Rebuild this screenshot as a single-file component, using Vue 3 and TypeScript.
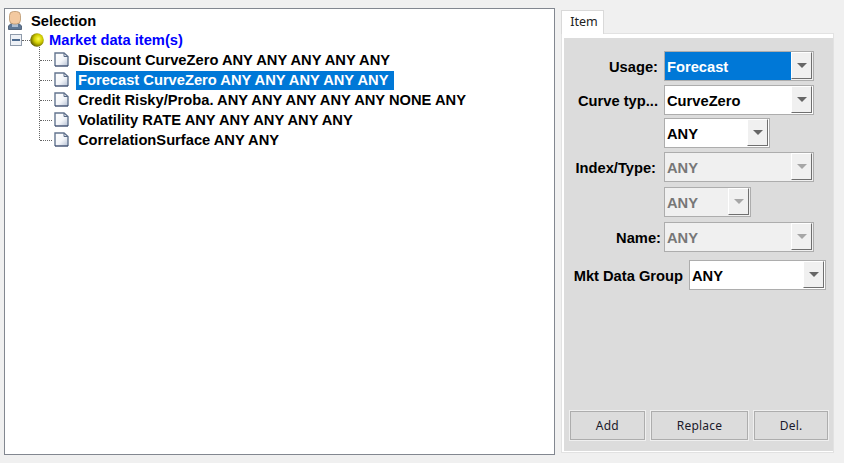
<script setup lang="ts">
interface TreeItem { label: string; selected?: boolean }
interface Field { label: string; value: string; cls: string; disabled?: boolean; active?: boolean }

const items: TreeItem[] = [
  { label: 'Discount CurveZero ANY ANY ANY ANY ANY' },
  { label: 'Forecast CurveZero ANY ANY ANY ANY ANY', selected: true },
  { label: 'Credit Risky/Proba. ANY ANY ANY ANY ANY NONE ANY' },
  { label: 'Volatility RATE ANY ANY ANY ANY ANY' },
  { label: 'CorrelationSurface ANY ANY' },
]

const fields: Field[] = [
  { label: 'Usage:', value: 'Forecast', cls: 'r-usage', active: true },
  { label: 'Curve typ...', value: 'CurveZero', cls: 'r-curve' },
  { label: '', value: 'ANY', cls: 'r-sub1' },
  { label: 'Index/Type:', value: 'ANY', cls: 'r-index', disabled: true },
  { label: '', value: 'ANY', cls: 'r-sub2', disabled: true },
  { label: 'Name:', value: 'ANY', cls: 'r-name', disabled: true },
  { label: 'Mkt Data Group', value: 'ANY', cls: 'r-group' },
]

const buttons = [
  { label: 'Add', cls: 'b-add' },
  { label: 'Replace', cls: 'b-replace' },
  { label: 'Del.', cls: 'b-del' },
]
</script>

<template>
  <div class="page">
    <section class="tree">
      <div class="root-row">
        <svg class="person" width="14" height="19" viewBox="0 0 14 19">
          <path d="M0.500 18.500V15L3 12.500H11L13.500 15V18.500Z" fill="#5f7896" stroke="#3f526a" stroke-width="0.800" />
          <rect x="4" y="13" width="6" height="3" fill="#aebdd0" />
          <rect x="1.500" y="0.500" width="11" height="12.500" rx="4" fill="#f3c9a0" stroke="#b8956f" stroke-width="0.800" />
        </svg>
        <span class="root-label">Selection</span>
      </div>
      <div class="group-row">
        <svg class="minus" width="12" height="12" viewBox="0 0 12 12">
          <rect x="0.500" y="0.500" width="11" height="11" fill="#eef1f6" stroke="#8f9bab" />
          <rect x="2" y="5" width="8" height="2" fill="#4d6a8e" />
        </svg>
        <i class="stub"></i>
        <svg class="ball" width="14" height="14" viewBox="0 0 14 14">
          <defs>
            <radialGradient id="ballFill" cx="0.6" cy="0.42" r="0.62">
              <stop offset="0" stop-color="#ffff4d" />
              <stop offset="0.5" stop-color="#cfcb00" />
              <stop offset="1" stop-color="#5c5900" />
            </radialGradient>
          </defs>
          <circle cx="7" cy="7" r="6.800" fill="url(#ballFill)" />
        </svg>
        <span class="group-label">Market data item(s)</span>
      </div>
      <ul class="items">
        <li v-for="item in items" :key="item.label" class="item">
          <svg class="doc" width="15" height="15" viewBox="0 0 15 15">
            <defs>
              <linearGradient id="docFill" x1="0" y1="0" x2="1" y2="1">
                <stop offset="0" stop-color="#ffffff" />
                <stop offset="0.55" stop-color="#f4f6fa" />
                <stop offset="1" stop-color="#b4bfd2" />
              </linearGradient>
            </defs>
            <path d="M1 1H10L14 4.500V14H1Z" fill="url(#docFill)" />
            <path d="M1 14V1H10L14 4.500V14" fill="none" stroke="#63748f" stroke-width="1.400" />
            <path d="M1 14H14" stroke="#3f5070" stroke-width="1.400" />
            <path d="M10 1V4.500H14" fill="none" stroke="#5a6b86" />
          </svg>
          <span class="item-label" :class="{ selected: item.selected }">{{ item.label }}</span>
        </li>
      </ul>
    </section>

    <section class="side">
      <div class="tab">Item</div>
      <div class="panel">
        <div class="form">
          <div v-for="f in fields" :key="f.cls" class="row" :class="f.cls">
            <label class="lbl">{{ f.label }}</label>
            <div class="combo" :class="{ disabled: f.disabled, active: f.active }">
              <span class="val">{{ f.value }}</span>
              <span class="arrow"><i></i></span>
            </div>
          </div>
        </div>
        <div class="actions">
          <button v-for="b in buttons" :key="b.label" class="btn" :class="b.cls">{{ b.label }}</button>
        </div>
      </div>
    </section>
  </div>
</template>

<style>
html, body { margin: 0; background: #f0f0f0; }
</style>

<style scoped>
.page {
  width: 844px;
  height: 463px;
  box-sizing: border-box;
  padding: 8px 10px 8px 4px;
  display: flex;
  gap: 6px;
  background: #f0f0f0;
  font-family: "Liberation Sans", Arial, sans-serif;
  overflow: hidden;
}

.tree {
  width: 551px;
  height: 447px;
  box-sizing: border-box;
  flex: none;
  background: #fff;
  border: 1px solid #828790;
  padding: 1px 0 0 3px;
  color: #000;
  font-size: 14.700px;
  font-weight: 700;
}
.root-row, .group-row, .item {
  height: 20px;
  display: flex;
  align-items: center;
}
.person { flex: none; margin-right: 9px; margin-top: 1px; }
.root-label { margin-top: 1px; }
.group-row { padding-left: 2px; }
.minus { flex: none; }
.stub { width: 8px; border-top: 1px dotted #666; flex: none; }
.ball { flex: none; margin-right: 5px; }
.group-label { color: #0000ff; }
.items {
  list-style: none;
  margin: 0;
  padding: 0 0 0 47px;
  position: relative;
}
.items::before {
  content: "";
  position: absolute;
  left: 31px;
  top: -3px;
  height: 93px;
  border-left: 1px dotted #666;
}
.item { position: relative; }
.item::before {
  content: "";
  position: absolute;
  left: -15px;
  width: 12px;
  top: 10px;
  border-top: 1px dotted #666;
}
.doc { flex: none; margin-top: -1px; margin-left: -1px; margin-right: 7px; }
.item-label {
  margin-top: 1px;
  padding: 0 2px;
  height: 19px;
  line-height: 19px;
  white-space: nowrap;
}
.item-label.selected { background: #0078d7; color: #fff; padding-right: 6px; }

.side {
  flex: none;
  width: 273px;
  padding-top: 2px;
  display: flex;
  flex-direction: column;
}
.tab {
  width: 43px;
  height: 24px;
  box-sizing: border-box;
  border: 1px solid #d9d9d9;
  border-bottom: 0;
  background: #fff;
  font-size: 12.500px;
  line-height: 22px;
  text-align: center;
  padding-left: 3px;
  font-family: "Noto Sans", sans-serif;
  color: #222;
  position: relative;
  z-index: 1;
}
.panel {
  height: 420px;
  margin-top: -1px;
  box-sizing: border-box;
  border-style: solid;
  border-color: #fff;
  border-width: 5px 1px 2px 3px;
  outline: 1px solid #e2e2e2;
  outline-offset: -1px;
  background: #dcdcdc;
  padding: 13px 0 0;
  display: flex;
  flex-direction: column;
  justify-content: space-between;
  width: 273px;
}
.form {
  display: flex;
  flex-direction: column;
  font-size: 14.700px;
  font-weight: 700;
}
.row { display: flex; align-items: center; height: 30px; }
.lbl {
  width: 94px;
  text-align: right;
  flex: none;
  white-space: nowrap;
  color: #000;
  padding-top: 1px;
}
.combo {
  margin-left: 6px;
  height: 30px;
  box-sizing: border-box;
  border: 1px solid #adadad;
  background: #fff;
  display: flex;
  align-items: stretch;
  color: #000;
  width: 150px;
}
.val { flex: 1; line-height: 30px; padding-left: 2px; }
.arrow {
  width: 21px;
  margin: 0 1px 1px 0;
  flex: none;
  box-sizing: border-box;
  background: #f0f0f0;
  border: 1px solid #fff;
  border-right: 1px solid #6f6f6f;
  border-bottom: 1px solid #6f6f6f;
  display: flex;
  align-items: center;
  justify-content: center;
}
.arrow i {
  width: 0;
  height: 0;
  border-left: 5px solid transparent;
  border-right: 5px solid transparent;
  border-top: 5px solid #666;
}
.combo.active .val { background: #0078d7; color: #fff; }
.combo.active { background: #f0f0f0; }
.combo.disabled { background: #f0f0f0; color: #777; }
.combo.disabled .arrow i { border-top-color: #a6a6a6; }

.r-curve { margin-top: 4px; }
.r-sub1 { margin-top: 3px; }
.r-sub1 .combo { width: 106px; }
.r-index { margin-top: 4px; }
.r-index .lbl { margin-left: -2px; margin-right: 2px; }
.r-sub2 { margin-top: 5px; }
.r-sub2 .combo { width: 87px; }
.r-name { margin-top: 5px; }
.r-name .lbl { margin-left: 3px; margin-right: -3px; }
.r-group { margin-top: 8px; }
.r-group .lbl { width: 119px; }
.r-group .combo { width: 137px; }

.actions {
  display: flex;
  gap: 6px;
  padding: 0 5px 11px 6px;
}
.btn {
  height: 29px;
  box-sizing: border-box;
  border: 1px solid #adadad;
  outline: 1px solid #efefef;
  background: #dcdcdc;
  font-family: "Noto Sans", sans-serif;
  font-size: 12px;
  letter-spacing: 0.2px;
  color: #1a1a2a;
  padding: 0;
}
.b-add { width: 75px; }
.b-replace { width: 98px; }
.b-del { width: 74px; }
</style>
